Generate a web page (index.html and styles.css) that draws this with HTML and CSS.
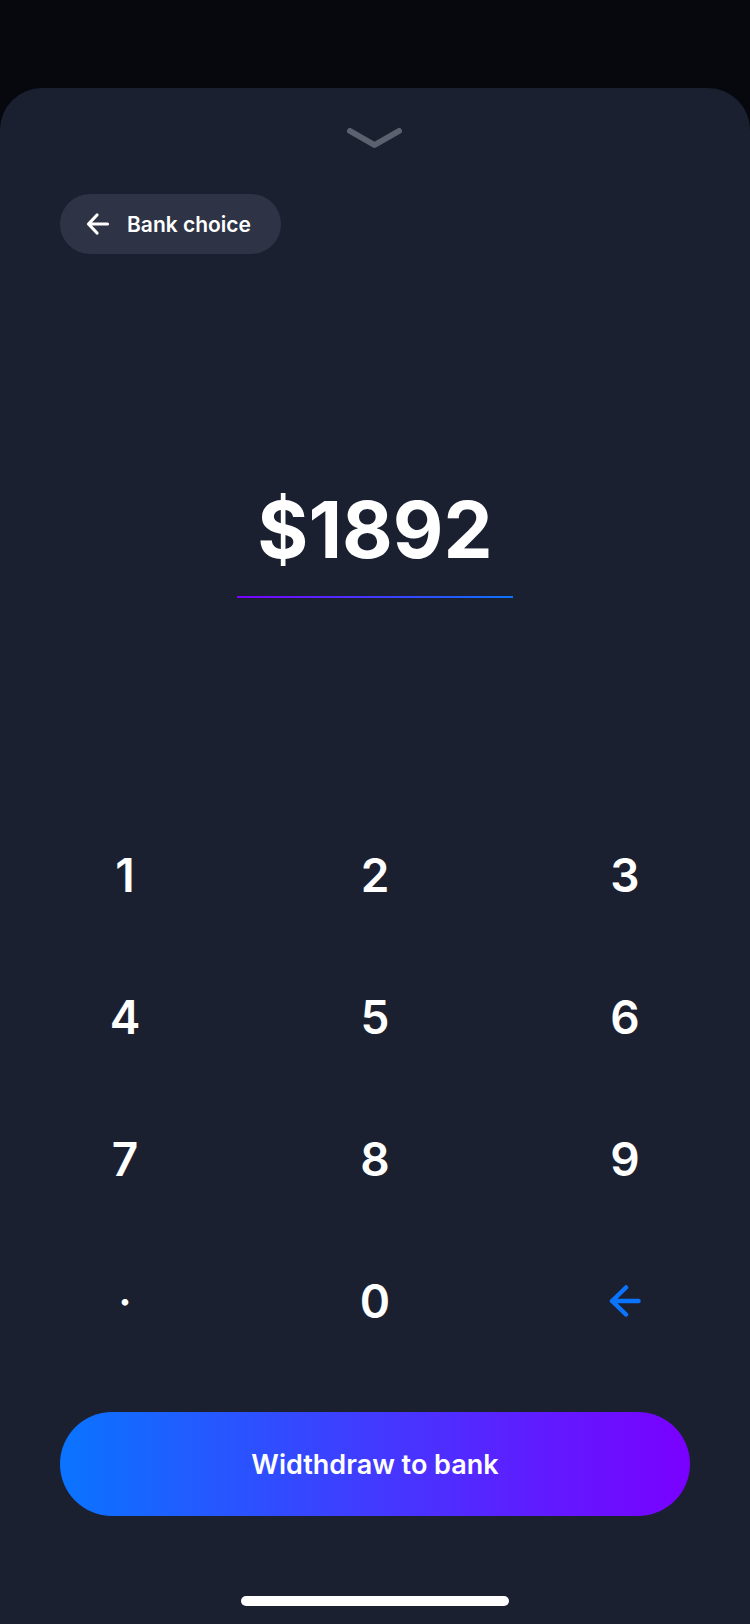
FILE: index.html
```html
<html>
<head>
<title>Withdraw</title>
<meta charset="UTF-8">
<link rel="stylesheet" href="styles.css">
</head>
<body>
<div class="status"></div>

<div class="sheet">
	<svg class="handle" width="60" height="24" viewBox="0 0 60 24">
		<path d="M5 6 L29.5 20 L54 6" fill="none" stroke="#5c6170" stroke-width="6" stroke-linecap="round" stroke-linejoin="round"/>
	</svg>

	<button class="back">
		<svg width="24" height="24" viewBox="0 0 24 24">
			<path d="M21.5 12 H2.5 M11 3 L2.5 12 L11 21" fill="none" stroke="#fff" stroke-width="3.2" stroke-linecap="round" stroke-linejoin="round"/>
		</svg>
		<span>Bank choice</span>
	</button>

	<div class="amount">$1892</div>
	<div class="underline"></div>

	<div class="keypad">
		<div class="key">1</div>
		<div class="key">2</div>
		<div class="key">3</div>
		<div class="key">4</div>
		<div class="key">5</div>
		<div class="key">6</div>
		<div class="key">7</div>
		<div class="key">8</div>
		<div class="key">9</div>
		<div class="key dot">·</div>
		<div class="key">0</div>
		<div class="key">
			<svg width="32" height="32" viewBox="0 0 32 32">
				<path d="M29.5 16 H3 M17 2.5 L3 16 L17 29.5" fill="none" stroke="#0a74ff" stroke-width="4.5" stroke-linecap="round" stroke-linejoin="round"/>
			</svg>
		</div>
	</div>

	<button class="withdraw">Widthdraw to bank</button>

	<div class="home-bar"></div>
</div>
</body>
</html>
```

FILE: styles.css
```css
html {
	background-color: #06080d;
}

body {
	margin: 0;
	width: 750px;
	font-family: Inter, "Noto Sans", sans-serif;
	color: #fff;
}

.status {
	height: 88px;
}

.sheet {
	display: flex;
	flex-direction: column;
	align-items: center;
	min-height: 1536px;
	background-color: #1b2030;
	border-radius: 42px 42px 0 0;
}

.handle {
	display: block;
	margin-top: 37px;
}

.back {
	align-self: flex-start;
	display: flex;
	align-items: center;
	gap: 17px;
	height: 60px;
	margin: 45px 0 0 60px;
	padding: 0 30px 0 26px;
	border: none;
	border-radius: 30px;
	background-color: #2e3346;
	color: #fff;
	font: 600 21px Inter, sans-serif;
}

.back svg {
	display: block;
}

.amount {
	margin-top: 237px;
	font-size: 78px;
	font-weight: 700;
	line-height: 1;
}

.underline {
	width: 276px;
	height: 2px;
	margin-top: 27px;
	background: linear-gradient(to right, #7b00ff, #0a74ff);
}

.keypad {
	display: grid;
	grid-template-columns: repeat(3, 250px);
	grid-auto-rows: 142px;
	margin-top: 206px;
}

.key {
	display: flex;
	align-items: center;
	justify-content: center;
	font-size: 46px;
	font-weight: 600;
	line-height: 1;
}

.key svg {
	display: block;
}

.key.dot {
	font-weight: 500;
}

.withdraw {
	width: 630px;
	height: 104px;
	margin-top: 40px;
	border: none;
	border-radius: 52px;
	background: linear-gradient(to right, #0a74ff, #7a00ff);
	color: #fff;
	font: 600 27px Inter, sans-serif;
}

.home-bar {
	width: 268px;
	height: 10px;
	margin-top: 80px;
	border-radius: 5px;
	background-color: #fff;
}
```
